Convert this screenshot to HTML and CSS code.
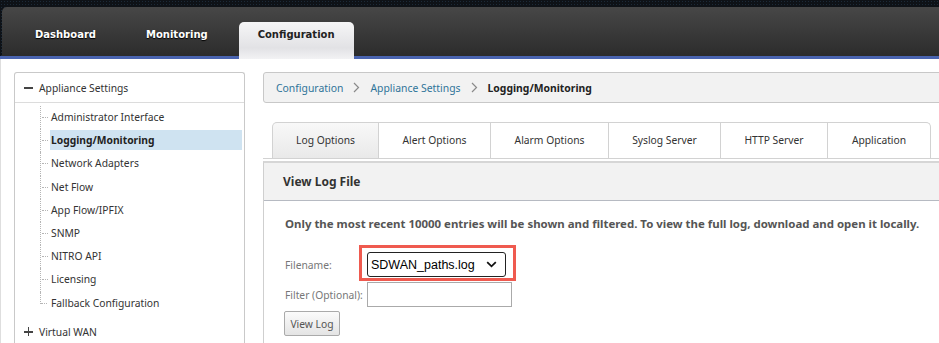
FILE: index.html
```html
<!DOCTYPE html>
<html>
<head>
	<title>Logging/Monitoring</title>
	<meta charset="utf-8">
	<meta name="viewport" content="width=device-width, initial-scale=1.0">
	<link rel="stylesheet" href="styles.css">
</head>
<body>
	<div class="header">
		<div class="navbar">
			<a href="#" class="nav-tab">Dashboard</a>
			<a href="#" class="nav-tab">Monitoring</a>
			<a href="#" class="nav-tab active">Configuration</a>
		</div>
	</div>

	<div class="page">
		<div class="sidebar">
			<div class="group-head"><span class="sign minus"></span>Appliance Settings</div>
			<ul class="tree">
				<li><span>Administrator Interface</span></li>
				<li class="selected"><span>Logging/Monitoring</span></li>
				<li><span>Network Adapters</span></li>
				<li><span>Net Flow</span></li>
				<li><span>App Flow/IPFIX</span></li>
				<li><span>SNMP</span></li>
				<li><span>NITRO API</span></li>
				<li><span>Licensing</span></li>
				<li class="last"><span>Fallback Configuration</span></li>
			</ul>
			<div class="group-head closed"><span class="sign plus"></span>Virtual WAN</div>
		</div>

		<div class="main">
			<div class="breadcrumb">
				<a href="#">Configuration</a>
				<svg class="chev" width="7" height="11" viewBox="0 0 7 11"><path d="M1 1 L5.5 5.5 L1 10" fill="none" stroke="#8a8a8a" stroke-width="1.2"/></svg>
				<a href="#">Appliance Settings</a>
				<svg class="chev" width="7" height="11" viewBox="0 0 7 11"><path d="M1 1 L5.5 5.5 L1 10" fill="none" stroke="#8a8a8a" stroke-width="1.2"/></svg>
				<b>Logging/Monitoring</b>
			</div>

			<div class="tabs">
				<div class="tab current">Log Options</div>
				<div class="tab">Alert Options</div>
				<div class="tab">Alarm Options</div>
				<div class="tab">Syslog Server</div>
				<div class="tab">HTTP Server</div>
				<div class="tab end">Application</div>
			</div>

			<div class="panel">
				<div class="panel-head">View Log File</div>
				<div class="panel-body">
					<p class="note">Only the most recent 10000 entries will be shown and filtered. To view the full log, download and open it locally.</p>
					<div class="form">
						<label>Filename:</label>
						<div class="field">
							<span class="highlight">
								<span class="select">SDWAN_paths.log
									<svg width="11" height="7" viewBox="0 0 11 7"><path d="M1.2 1.2 L5.5 5.3 L9.8 1.2" fill="none" stroke="#111" stroke-width="1.8"/></svg>
								</span>
							</span>
						</div>
						<label>Filter (Optional):</label>
						<div class="field"><input type="text" class="text-input"></div>
					</div>
					<button class="btn">View Log</button>
				</div>
			</div>
		</div>
	</div>
</body>
</html>
```
FILE: styles.css
```css
*, *::before, *::after {
	box-sizing: border-box;
	margin: 0;
	padding: 0;
}

html {
	overflow: hidden;
}

body {
	font-family: 'Noto Sans', sans-serif;
	font-size: 10.3px;
	color: #333;
	background: #fff;
	width: 939px;
	height: 343px;
	overflow: hidden;
}

/* top navigation */
.header {
	padding: 7px 0 0 2px;
	background-color: #0e1217;
	background-image: radial-gradient(#1c2a38 0.8px, transparent 0.9px);
	background-size: 3px 3px;
	border-bottom: 3px solid #4a64b0;
}

.navbar {
	height: 49px;
	border-radius: 5px 0 0 0;
	background: linear-gradient(#474747, #2c2c2c);
	display: flex;
	align-items: flex-end;
	padding-left: 14px;
	gap: 12px;
}

.nav-tab {
	display: block;
	height: 34px;
	padding: 0 19px;
	line-height: 26px;
	font-family: 'DejaVu Sans', sans-serif;
	font-weight: bold;
	font-size: 10px;
	color: #fff;
	text-decoration: none;
	text-shadow: 0 1px 1px #000;
}

.nav-tab.active {
	position: relative;
	height: 37px;
	margin-bottom: -3px;
	border-radius: 5px 5px 0 0;
	background: linear-gradient(#f6f6f7, #e2e2e5 70%, #f2f2f4);
	color: #222;
	text-shadow: none;
}

/* layout */
.page {
	display: flex;
	align-items: flex-start;
	padding: 13px 0 0 13px;
	border-left: 1px solid #dedede;
	height: 285px;
}

.sidebar {
	width: 231px;
	height: 272px;
	overflow: hidden;
	border: 1px solid #c9c9c9;
	border-bottom: none;
	border-radius: 3px 3px 0 0;
	flex-shrink: 0;
}

.group-head {
	height: 30px;
	line-height: 32px;
	padding-left: 9px;
	border-bottom: 1px solid #dcdcdc;
	display: flex;
	align-items: center;
	color: #333;
}

.group-head.closed {
	border-bottom: none;
	height: 34px;
	line-height: 34px;
}

.sign {
	position: relative;
	width: 9px;
	height: 9px;
	margin-right: 6px;
}

.sign::before, .sign::after {
	content: '';
	position: absolute;
	background: #444;
}

.sign::before {
	left: 0;
	top: 4px;
	width: 9px;
	height: 1.6px;
}

.plus::after {
	left: 3.7px;
	top: 0;
	width: 1.6px;
	height: 9px;
}

.tree {
	list-style: none;
	padding: 3px 0 0 0;
	margin-left: 25px;
}

.tree li {
	position: relative;
	height: 23.2px;
	padding: 1px 2px 2px 9px;
	border-left: 1px dotted #b5b5b5;
}

.tree li.last {
	border-left: none;
	padding-left: 10px;
}

.tree li.last::after {
	content: '';
	position: absolute;
	left: 0;
	top: 0;
	height: 12px;
	border-left: 1px dotted #b5b5b5;
}

.tree li::before {
	content: '';
	position: absolute;
	left: 1px;
	top: 11px;
	width: 6px;
	border-top: 1px dotted #b5b5b5;
}

.tree li span {
	display: block;
	height: 20px;
	line-height: 21px;
	padding-left: 1px;
	color: #333;
}

.tree li.selected span {
	background: #cfe3f1;
	font-weight: bold;
	color: #222;
}

.main {
	margin-left: 18px;
	width: 700px;
	flex-shrink: 0;
}

/* breadcrumb */
.breadcrumb {
	height: 31px;
	border: 1px solid #c8c8c8;
	border-radius: 3px;
	background: #f2f2f2;
	padding-left: 12px;
	display: flex;
	align-items: center;
	font-size: 10.4px;
}

.breadcrumb a {
	color: #2f7499;
	text-decoration: none;
}

.breadcrumb .chev {
	margin: 0 10px;
}

.breadcrumb b {
	color: #222;
}

/* tabs */
.tabs {
	display: flex;
	margin-top: 19px;
	padding-left: 9px;
	border-bottom: 1px solid #d2d2d2;
}

.tab {
	height: 36px;
	line-height: 35px;
	text-align: center;
	border: 1px solid #d2d2d2;
	border-left: none;
	border-bottom: none;
	color: #333;
	font-size: 10.3px;
	background: #fff;
}

.tab:nth-child(1) { width: 107px; }
.tab:nth-child(2) { width: 112px; }
.tab:nth-child(3) { width: 118px; }
.tab:nth-child(4) { width: 112px; }
.tab:nth-child(5) { width: 107px; }
.tab:nth-child(6) { width: 103px; }

.tab.current {
	border-left: 1px solid #d2d2d2;
	border-radius: 5px 0 0 0;
	background: linear-gradient(#f8f8f8, #e9e9e9);
}

.tab.end {
	border-radius: 0 5px 0 0;
}

/* panel */
.panel {
	margin-top: 2px;
	border-left: 1px solid #cfcfcf;
	border-top: 2px solid #d6d6d6;
}

.panel-head {
	height: 38px;
	line-height: 38px;
	padding-left: 19px;
	background: #f2f2f2;
	border-bottom: 1px solid #b6bac2;
	font-weight: bold;
	font-size: 12px;
	color: #333;
}

.panel-body {
	padding: 15px 0 0 21px;
	height: 145px;
}

.note {
	font-weight: bold;
	font-size: 11.45px;
	color: #555;
	line-height: 15px;
}

.form {
	display: grid;
	grid-template-columns: 82px auto;
	grid-auto-rows: 25px;
	row-gap: 5px;
	align-items: center;
	margin-top: 21px;
}

.form label {
	color: #777;
}

.field {
	display: flex;
	align-items: center;
}

.highlight {
	display: inline-block;
	border: 3px solid #ef5a4f;
	padding: 4px 7px 1px 5px;
	margin: -7px 0 -4px -8px;
}

.select {
	width: 139px;
	height: 25px;
	border: 1.6px solid #222;
	border-radius: 3px;
	background: #fff;
	display: flex;
	align-items: center;
	justify-content: space-between;
	padding: 0 8px 0 3px;
	font-family: 'Liberation Sans', sans-serif;
	font-size: 12.5px;
	color: #000;
}

.text-input {
	width: 145px;
	height: 25px;
	border: 1px solid #aaa;
	background: #fff;
}

.btn {
	margin-top: 4px;
	margin-left: -1px;
	width: 56px;
	height: 25px;
	border: 1px solid #aaa;
	border-radius: 2px;
	background: linear-gradient(#fbfbfb, #e4e4e4);
	font-family: 'Noto Sans', sans-serif;
	font-size: 10.3px;
	color: #555;
}
```
